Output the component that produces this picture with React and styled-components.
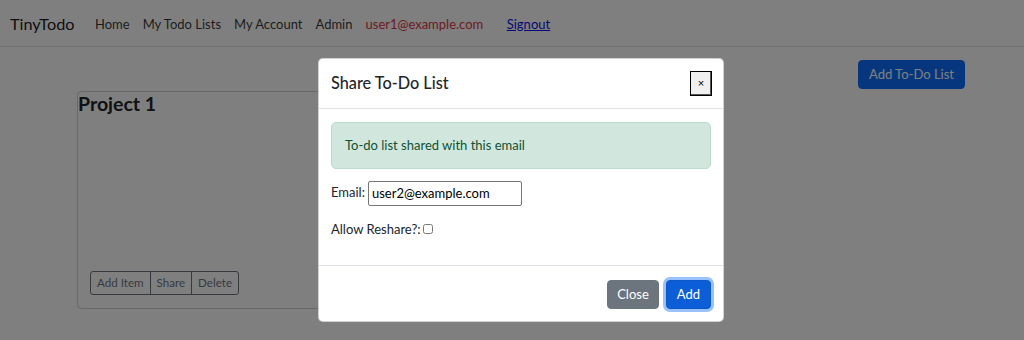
import React from 'react'
import styled, { createGlobalStyle } from 'styled-components';

const GlobalStyle = createGlobalStyle`
    html, body {
        margin: 0;
        padding: 0;
        background: #ffffff;
        font-family: "Lato", "Noto Sans", sans-serif;
        font-size: 13px;
        line-height: 1.5;
        color: #212529;
    }
    * { box-sizing: border-box; }
`;

function App() {
    return (
        <Page>
            <GlobalStyle/>
            <Navbar>
                <Brand>TinyTodo</Brand>
                <NavLinks>
                    <NavLink>Home</NavLink>
                    <NavLink>My Todo Lists</NavLink>
                    <NavLink>My Account</NavLink>
                    <NavLink>Admin</NavLink>
                    <UserEmail>user1@example.com</UserEmail>
                    <Signout href="#">Signout</Signout>
                </NavLinks>
            </Navbar>
            <Content>
                <TopRow>
                    <PrimaryButton>Add To-Do List</PrimaryButton>
                </TopRow>
                <Card>
                    <CardTitle>Project 1</CardTitle>
                    <ButtonGroup>
                        <GroupButton>Add Item</GroupButton>
                        <GroupButton>Share</GroupButton>
                        <GroupButton>Delete</GroupButton>
                    </ButtonGroup>
                </Card>
            </Content>
            <Backdrop/>
            <Modal>
                <ModalHeader>
                    <ModalTitle>Share To-Do List</ModalTitle>
                    <CloseX>×</CloseX>
                </ModalHeader>
                <ModalBody>
                    <Alert>To-do list shared with this email</Alert>
                    <FormRow>
                        <label>Email:</label>
                        <TextInput defaultValue="user2@example.com"/>
                    </FormRow>
                    <FormRow>
                        <label>Allow Reshare?:</label>
                        <Check type="checkbox"/>
                    </FormRow>
                </ModalBody>
                <ModalFooter>
                    <FooterButton variant="secondary">Close</FooterButton>
                    <FooterButton variant="primary" focused>Add</FooterButton>
                </ModalFooter>
            </Modal>
        </Page>
    )
}

const Page = styled.div`
    position: relative;
    width: 1024px;
    height: 340px;
    overflow: hidden;
`;

const Navbar = styled.nav`
    display: flex;
    align-items: center;
    height: 47px;
    padding: 3px 10px 0;
    border-bottom: 1px solid #dee2e6;
`;

const Brand = styled.span`
    font-size: 16.25px;
    color: rgba(0,0,0,.9);
    margin-right: 14px;
`;

const NavLinks = styled.div`
    display: flex;
    align-items: center;
`;

const NavLink = styled.span`
    padding: 0 6.5px;
    color: rgba(0,0,0,.8);
`;

const UserEmail = styled.span`
    padding: 0 6.5px;
    color: #dc3545;
    margin-right: 17px;
`;

const Signout = styled.a`
    color: #0d0dee;
    text-decoration: underline;
`;

const Content = styled.div`
    padding: 13px 59px 0 77px;
`;

const TopRow = styled.div`
    display: flex;
    justify-content: flex-end;
`;

const PrimaryButton = styled.button`
    font: inherit;
    background: #0d6efd;
    color: #fff;
    border: 1px solid #0d6efd;
    border-radius: 4px;
    height: 29px;
    padding: 0 10px;
`;

const Card = styled.div`
    display: flex;
    flex-direction: column;
    justify-content: space-between;
    width: 320px;
    height: 218px;
    margin-top: 2px;
    border: 1px solid rgba(0,0,0,.175);
    border-radius: 4px;
`;

const CardTitle = styled.h3`
    margin: 0;
    font-size: 19.5px;
    font-weight: 700;
    line-height: 1.2;
`;

const ButtonGroup = styled.div`
    display: flex;
    margin: 0 0 13px 12px;
`;

const GroupButton = styled.button`
    font: inherit;
    font-size: 11.6px;
    color: #6c757d;
    background: transparent;
    border: 1px solid #6c757d;
    height: 24px;
    padding: 0 6px;
    margin-left: -1px;
    &:first-child { border-radius: 3px 0 0 3px; margin-left: 0; }
    &:last-child { border-radius: 0 3px 3px 0; }
`;

const Backdrop = styled.div`
    position: absolute;
    inset: 0;
    background: rgba(0,0,0,.5);
`;

const Modal = styled.div`
    position: absolute;
    top: 58px;
    left: 318px;
    width: 406px;
    background: #fff;
    border-radius: 5px;
    border: 1px solid rgba(0,0,0,.175);
`;

const ModalHeader = styled.div`
    display: flex;
    align-items: center;
    justify-content: space-between;
    height: 50px;
    padding: 0 11px 0 12px;
    border-bottom: 1px solid #dee2e6;
`;

const ModalTitle = styled.h5`
    margin: 0;
    font-size: 16.25px;
    font-weight: 500;
`;

const CloseX = styled.button`
    width: 22px;
    height: 25px;
    padding: 0;
    font-size: 11px;
    line-height: 1;
    color: #000;
    background: #f0f0f0;
    border: 1px solid #000;
    box-shadow: inset -1px -1px 0 #555;
`;

const ModalBody = styled.div`
    padding: 13px 12px 12px;
`;

const Alert = styled.div`
    padding: 12.5px 13px;
    margin-bottom: 12px;
    color: #0f5132;
    background: #d1e7dd;
    border: 1px solid #badbcc;
    border-radius: 5px;
`;

const FormRow = styled.div`
    display: flex;
    align-items: center;
    gap: 3px;
    margin-bottom: 14px;
`;

const TextInput = styled.input`
    font: inherit;
    width: 154px;
    height: 25px;
    padding: 0 3px;
    border: 1px solid #767676;
    border-radius: 2px;
    color: #000;
`;

const Check = styled.input`
    width: 10px;
    height: 10px;
    margin: 0;
`;

const ModalFooter = styled.div`
    display: flex;
    justify-content: flex-end;
    gap: 7px;
    padding: 14px 12px 12px;
    border-top: 1px solid #dee2e6;
`;

const FooterButton = styled.button`
    font: inherit;
    height: 29px;
    padding: 0 ${p => p.variant === 'primary' ? '10px' : '9px'};
    color: #fff;
    border-radius: 4px;
    border: 1px solid ${p => p.variant === 'primary' ? '#0a58ca' : '#6c757d'};
    background: ${p => p.variant === 'primary' ? '#0b5ed7' : '#6c757d'};
    box-shadow: ${p => p.focused ? '0 0 0 3px rgba(49,132,253,.5)' : 'none'};
`;

export default App
